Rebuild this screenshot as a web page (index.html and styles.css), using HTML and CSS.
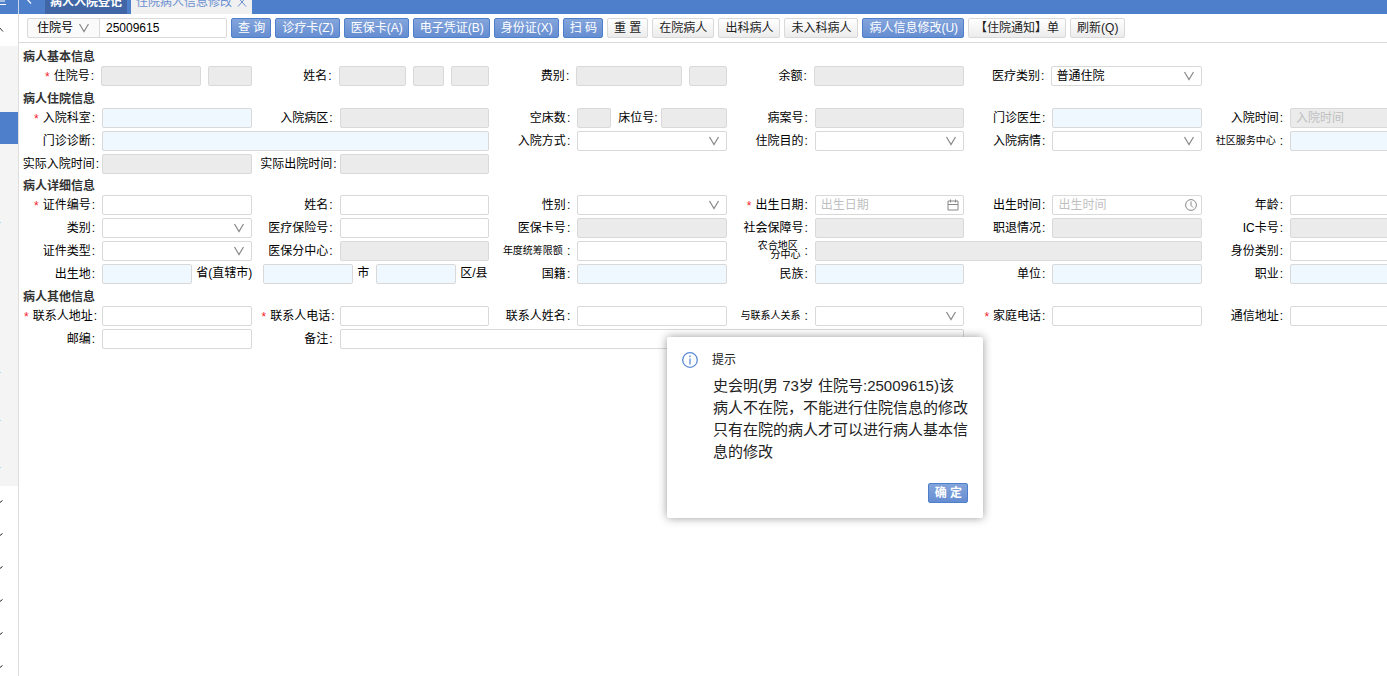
FILE: index.html
```html
<!DOCTYPE html>
<html lang="zh-CN">
<head>
<meta charset="utf-8">
<title>住院病人信息修改</title>
<link rel="stylesheet" href="styles.css">
</head>
<body>
<svg class="defs" aria-hidden="true">
  <symbol id="chevron" viewBox="0 0 12 12"><path d="M1.500 2 L6 9.500 L10.500 2" fill="none" stroke="currentColor" stroke-width="1.200"/></symbol>
</svg>
<header class="topbar">
  <button class="topbar-menu" aria-label="菜单"><svg viewBox="0 0 18 14"><path d="M0 1H5M0 4.500H6" stroke="#fff" stroke-width="1.200"/></svg></button>
  <button class="topbar-back" aria-label="后退"><svg viewBox="0 0 26 14"><path d="M12 3.500L7 -2" fill="none" stroke="#fff" stroke-width="1.200"/></svg></button>
  <nav class="tabs">
    <a class="tab tab-dark" href="#">病人入院登记</a>
    <a class="tab tab-current" href="#">住院病人信息修改<svg class="tab-close" viewBox="0 0 10 10"><path d="M1 0.500L9 9.500M9 0.500L1 9.500" stroke="currentColor"/></svg></a>
  </nav>
</header>
<div class="body">
  <aside class="sidebar">
    <div class="side-head"><svg viewBox="0 0 18 32"><path d="M-3 18L-1 13L3 17.500" fill="none" stroke="#333" stroke-width="1"/></svg></div>
    <div class="side-menu"><div class="side-active"></div></div>
    <div class="side-groups">
      <svg viewBox="0 0 18 32"><path d="M-2 18L2.500 14.500" stroke="#222" fill="none"/></svg>
      <svg viewBox="0 0 18 32"><path d="M-2 18L2.500 14.500" stroke="#222" fill="none"/></svg>
      <svg viewBox="0 0 18 32"><path d="M-2 18L2.500 14.500" stroke="#222" fill="none"/></svg>
      <svg viewBox="0 0 18 32"><path d="M-2 18L2.500 14.500" stroke="#222" fill="none"/></svg>
      <svg viewBox="0 0 18 32"><path d="M-2 18L2.500 14.500" stroke="#222" fill="none"/></svg>
      <svg viewBox="0 0 18 32"><path d="M-2 18L2.500 14.500" stroke="#222" fill="none"/></svg>
    </div>
  </aside>
  <main class="main">
    <div class="toolbar">
      <div class="search">
        <div class="select search-type"><select aria-label="查询类型"><option>住院号</option></select><svg><use href="#chevron"/></svg></div>
        <input class="search-text" type="text" aria-label="查询内容" value="25009615">
      </div>
      <button class="btn primary">查 询</button>
      <button class="btn primary">诊疗卡(Z)</button>
      <button class="btn primary">医保卡(A)</button>
      <button class="btn primary">电子凭证(B)</button>
      <button class="btn primary">身份证(X)</button>
      <button class="btn primary">扫 码</button>
      <button class="btn">重 置</button>
      <button class="btn">在院病人</button>
      <button class="btn">出科病人</button>
      <button class="btn">未入科病人</button>
      <button class="btn primary">病人信息修改(U)</button>
      <button class="btn">【住院通知】单</button>
      <button class="btn">刷新(Q)</button>
    </div>
    <form class="form">
      <h2 class="title">病人基本信息</h2>
      <div class="grid basic">
        <div class="field"><label class="req" for="b1">住院号</label><div class="group"><input id="b1" class="w-100" disabled><input class="grow" aria-label="住院次数" disabled></div></div>
        <div class="field"><label for="b2">姓名</label><div class="group"><input id="b2" class="grow" disabled><input class="w-31" aria-label="性别" disabled><input class="w-38" aria-label="年龄" disabled></div></div>
        <div class="field"><label for="b3">费别</label><div class="group"><input id="b3" class="grow" disabled><input class="w-38" aria-label="费别代码" disabled></div></div>
        <div class="field"><label for="b4">余额</label><input id="b4" disabled></div>
        <div class="field"><label for="b5">医疗类别</label><div class="select"><select id="b5"><option>普通住院</option></select><svg><use href="#chevron"/></svg></div></div>
      </div>

      <h2 class="title">病人住院信息</h2>
      <div class="grid">
        <div class="field"><label class="req" for="h1">入院科室</label><input id="h1" class="lookup"></div>
        <div class="field"><label for="h2">入院病区</label><input id="h2" disabled></div>
        <div class="field"><label for="h3">空床数</label><div class="group beds"><input id="h3" class="w-34" disabled><label class="inner" for="h4">床位号</label><input id="h4" class="grow" disabled></div></div>
        <div class="field"><label for="h5">病案号</label><input id="h5" disabled></div>
        <div class="field"><label for="h6">门诊医生</label><input id="h6" class="lookup"></div>
        <div class="field"><label for="h7">入院时间</label><input id="h7" placeholder="入院时间" disabled></div>

        <div class="field span-2"><label for="h8">门诊诊断</label><input id="h8" class="lookup"></div>
        <div class="field"><label for="h9">入院方式</label><div class="select"><select id="h9"><option></option></select><svg><use href="#chevron"/></svg></div></div>
        <div class="field"><label for="h10">住院目的</label><div class="select"><select id="h10"><option></option></select><svg><use href="#chevron"/></svg></div></div>
        <div class="field"><label for="h11">入院病情</label><div class="select"><select id="h11"><option></option></select><svg><use href="#chevron"/></svg></div></div>
        <div class="field"><label class="small" for="h12">社区服务中心</label><input id="h12" class="lookup"></div>

        <div class="field"><label class="tight" for="h13">实际入院时间</label><input id="h13" disabled></div>
        <div class="field"><label class="tight" for="h14">实际出院时间</label><input id="h14" disabled></div>
      </div>

      <h2 class="title title-low">病人详细信息</h2>
      <div class="grid">
        <div class="field"><label class="req" for="d1">证件编号</label><input id="d1"></div>
        <div class="field"><label for="d2">姓名</label><input id="d2"></div>
        <div class="field"><label for="d3">性别</label><div class="select"><select id="d3"><option></option></select><svg><use href="#chevron"/></svg></div></div>
        <div class="field"><label class="req" for="d4">出生日期</label><div class="picker"><input id="d4" placeholder="出生日期"><svg viewBox="0 0 12 12"><path d="M1 2h10v9H1zM1 5.500h10M3.500 0.500v3M8.500 0.500v3" fill="none" stroke="currentColor"/></svg></div></div>
        <div class="field"><label for="d5">出生时间</label><div class="picker"><input id="d5" placeholder="出生时间"><svg viewBox="0 0 12 12"><circle cx="6" cy="6" r="5.400" fill="none" stroke="currentColor"/><path d="M6 2.500V6.500L8 8.500" fill="none" stroke="currentColor"/></svg></div></div>
        <div class="field"><label for="d6">年龄</label><input id="d6"></div>

        <div class="field"><label for="d7">类别</label><div class="select"><select id="d7"><option></option></select><svg><use href="#chevron"/></svg></div></div>
        <div class="field"><label for="d8">医疗保险号</label><input id="d8"></div>
        <div class="field"><label for="d9">医保卡号</label><input id="d9" disabled></div>
        <div class="field"><label for="d10">社会保障号</label><input id="d10" disabled></div>
        <div class="field"><label for="d11">职退情况</label><input id="d11" disabled></div>
        <div class="field"><label for="d12">IC卡号</label><input id="d12" disabled></div>

        <div class="field"><label for="d13">证件类型</label><div class="select"><select id="d13"><option></option></select><svg><use href="#chevron"/></svg></div></div>
        <div class="field"><label for="d14">医保分中心</label><input id="d14" disabled></div>
        <div class="field"><label class="small" for="d15">年度统筹限额</label><input id="d15"></div>
        <div class="field span-2"><label class="small" for="d16"><span class="two-line">农合地区&nbsp;<br>分中心</span></label><input id="d16" disabled></div>
        <div class="field"><label for="d17">身份类别</label><input id="d17"></div>

        <div class="field span-2"><label for="d18">出生地</label><div class="place"><input id="d18" class="lookup"><label class="unit unit-wide" for="d18">省(直辖市)</label><input id="d19" class="lookup"><label class="unit" for="d19">市</label><input id="d20" class="lookup place-last"><label class="unit unit-end" for="d20">区/县</label></div></div>
        <div class="field"><label for="d21">国籍</label><input id="d21" class="lookup"></div>
        <div class="field"><label for="d22">民族</label><input id="d22" class="lookup"></div>
        <div class="field"><label for="d23">单位</label><input id="d23" class="lookup"></div>
        <div class="field"><label for="d24">职业</label><input id="d24" class="lookup"></div>
      </div>

      <h2 class="title">病人其他信息</h2>
      <div class="grid">
        <div class="field"><label class="req snug" for="o1">联系人地址</label><input id="o1"></div>
        <div class="field"><label class="req snug" for="o2">联系人电话</label><input id="o2"></div>
        <div class="field"><label for="o3">联系人姓名</label><input id="o3"></div>
        <div class="field"><label class="small" for="o4">与联系人关系</label><div class="select"><select id="o4"><option></option></select><svg><use href="#chevron"/></svg></div></div>
        <div class="field"><label class="req" for="o5">家庭电话</label><input id="o5"></div>
        <div class="field"><label for="o6">通信地址</label><input id="o6"></div>
        <div class="field"><label for="o7">邮编</label><input id="o7"></div>
        <div class="field span-3"><label for="o8">备注</label><input id="o8"></div>
      </div>
    </form>
  </main>
</div>
<section class="dialog" role="dialog" aria-labelledby="dlg-title">
  <svg class="dialog-icon" viewBox="0 0 16 16"><circle cx="8" cy="8" r="7.300" fill="none" stroke="#5b8bd6" stroke-width="1.300"/><path d="M8 3.500v1.700M8 6.500v6" stroke="#5b8bd6" stroke-width="1.300"/></svg>
  <div class="dialog-body">
    <h3 id="dlg-title" class="dialog-title">提示</h3>
    <p class="dialog-text">史会明(男 73岁 住院号:25009615)该<br>病人不在院，不能进行住院信息的修改<br>只有在院的病人才可以进行病人基本信息的修改</p>
    <div class="dialog-foot"><button class="btn primary strong">确 定</button></div>
  </div>
</section>
</body>
</html>
```
FILE: styles.css
```css
* { box-sizing: border-box; }
html, body { height: 100%; }
body {
  margin: 0;
  position: relative;
  display: flex;
  flex-direction: column;
  overflow: hidden;
  background: #fff;
  color: #000;
  font: 12px/18px "Liberation Sans", "Noto Sans CJK SC", sans-serif;
}
input, select, button { font: inherit; color: inherit; margin: 0; }
.defs { position: absolute; width: 0; height: 0; }

/* top bar */
.topbar {
  flex: none;
  display: flex;
  align-items: flex-end;
  height: 14px;
  overflow: hidden;
  background: #4d7fcb;
}
.topbar-menu, .topbar-back { height: 14px; padding: 0; border: 0; background: none; }
.topbar-menu svg, .topbar-back svg { display: block; width: 100%; height: 14px; }
.topbar-menu { width: 19px; border-right: 1px solid #c8d6ee; }
.topbar-back { width: 26px; }
.tabs { display: flex; gap: 4px; }
.tab {
  display: flex;
  align-items: center;
  gap: 5px;
  height: 25px;
  padding: 0 5px;
  text-decoration: none;
}
.tab-dark { background: #4066a6; color: #fff; font-weight: bold; }
.tab-current { background: #f0f0f0; color: #6a8fd0; }
.tab-close { width: 10px; height: 10px; }

/* sidebar */
.body { flex: 1; display: flex; min-height: 0; }
.sidebar { flex: none; width: 19px; border-right: 1px solid #dedede; }
.side-head { height: 32px; }
.side-head svg, .side-groups svg { display: block; width: 18px; height: 32px; }
.side-menu {
  height: 440px;
  padding-top: 66px;
  background:
    linear-gradient(#9bdcf5, #9bdcf5) 0 176px / 1px 1px no-repeat,
    linear-gradient(#9bdcf5, #9bdcf5) 0 326px / 1px 1px no-repeat,
    linear-gradient(#9bdcf5, #9bdcf5) 0 374px / 1px 1px no-repeat,
    linear-gradient(#9bdcf5, #9bdcf5) 0 421px / 1px 1px no-repeat,
    #f4f4f4;
}
.side-active { height: 32px; background: #4d7fcb; }
.side-groups { display: flex; flex-direction: column; gap: 1px; }

/* toolbar */
.main { flex: 1; min-width: 0; overflow: hidden; }
.toolbar {
  display: flex;
  align-items: center;
  gap: 4px;
  height: 29px;
  padding-left: 8px;
  border-bottom: 1px solid #d9d9d9;
}
.search { display: flex; width: 200px; }
.search .search-type { flex: none; width: 73px; }
.search-type select { padding-left: 9px; background: #fafafa; border-radius: 2px 0 0 2px; }
.search .search-text { flex: 1; margin-left: -1px; border-radius: 0 2px 2px 0; padding-left: 6px; }
.btn {
  flex: none;
  height: 20px;
  padding: 0 6px;
  border: 1px solid #d9d9d9;
  border-radius: 2px;
  background: linear-gradient(#fff, #ececec);
  color: #222;
  line-height: 18px;
  white-space: nowrap;
}
.btn.primary {
  padding-right: 5px;
  border-color: #4d7fcb;
  background: linear-gradient(#84a5dc, #658dd1);
  color: #fff;
}
.btn.strong { font-weight: bold; }

/* form */
.form { padding-top: 4px; }
.title {
  height: 19px;
  margin: 0;
  padding-left: 4px;
  font-size: 12px;
  line-height: 21px;
  font-weight: bold;
  color: #333;
}
.title-low { height: 18px; line-height: 19px; }
.grid { display: grid; grid-template-columns: repeat(6, 17.37%); --label: 83px; }
.basic { --label: 82px; }
.span-2 { grid-column: span 2; }
.span-3 { grid-column: span 3; }
.field { display: flex; height: 23px; padding-right: 5px; }
.field > label {
  flex: none;
  display: flex;
  justify-content: flex-end;
  width: var(--label);
  height: 20px;
  line-height: 20px;
  white-space: nowrap;
}
.field > label::after { content: ":"; margin: 0 7px 0 1px; }
.field > .req::before { content: "*"; color: #f5222d; margin: 1px 4px 0 0; }
.field > .snug::after { margin-right: 5px; }
.field > .tight::after { margin-right: 3px; }
.field > .small { font-size: 10px; line-height: 19px; }
.field > .small::after { margin-left: 4px; font-size: 12px; line-height: 21px; }
.two-line { line-height: 9px; text-align: right; }

input, select {
  min-width: 0;
  height: 20px;
  padding: 0 5px;
  border: 1px solid #d9d9d9;
  border-radius: 2px;
  background: #fff;
  outline: 0;
}
select { padding: 0 4px; }
input:disabled { background: #ebebeb; }
input::placeholder { color: #bfbfbf; }
input.lookup { background: #eff7ff; }
.field > input, .field > div { flex: 1; min-width: 0; }
.group { display: flex; gap: 7px; }
.beds { gap: 3px; }
.inner { margin-left: 4px; line-height: 20px; white-space: nowrap; }
.inner::after { content: ":"; }
.grow { flex: 1; }
.w-100 { width: 100px; }
.w-31 { width: 31px; }
.w-34 { width: 34px; }
.w-38 { width: 38px; }
.place { display: flex; }
.place input { flex: 91; }
.place .place-last { flex: 79; }
.unit { flex: none; width: 23px; padding-left: 4px; line-height: 19px; white-space: nowrap; }
.unit-wide { width: 71px; }
.unit-end { width: 33px; }

.select, .picker { position: relative; height: 20px; }
.select select { display: block; width: 100%; appearance: none; }
.select svg {
  position: absolute;
  right: 7px;
  top: 4px;
  width: 12px;
  height: 12px;
  color: #888;
  pointer-events: none;
}
.search-type svg { right: 10px; }
.picker input { display: block; width: 100%; }
.picker svg { position: absolute; right: 5px; top: 4px; width: 12px; height: 12px; color: #888; }

/* message dialog */
.dialog {
  position: absolute;
  left: 667px;
  top: 337px;
  display: flex;
  gap: 14px;
  width: 316px;
  padding: 14px 15px 15px;
  border-radius: 2px;
  background: #fff;
  box-shadow: 0 0 10px rgba(0, 0, 0, 0.4);
}
.dialog-icon { flex: none; width: 16px; height: 16px; margin-top: 1px; }
.dialog-body { flex: 1; min-width: 0; }
.dialog-title { margin: 0 0 6px; font-size: 12px; line-height: 18px; font-weight: normal; color: #222; }
.dialog-text { margin: 0 -5px 0 1px; font-size: 15px; line-height: 22px; color: #222; }
.dialog-foot { display: flex; justify-content: flex-end; margin-top: 20px; }
```
